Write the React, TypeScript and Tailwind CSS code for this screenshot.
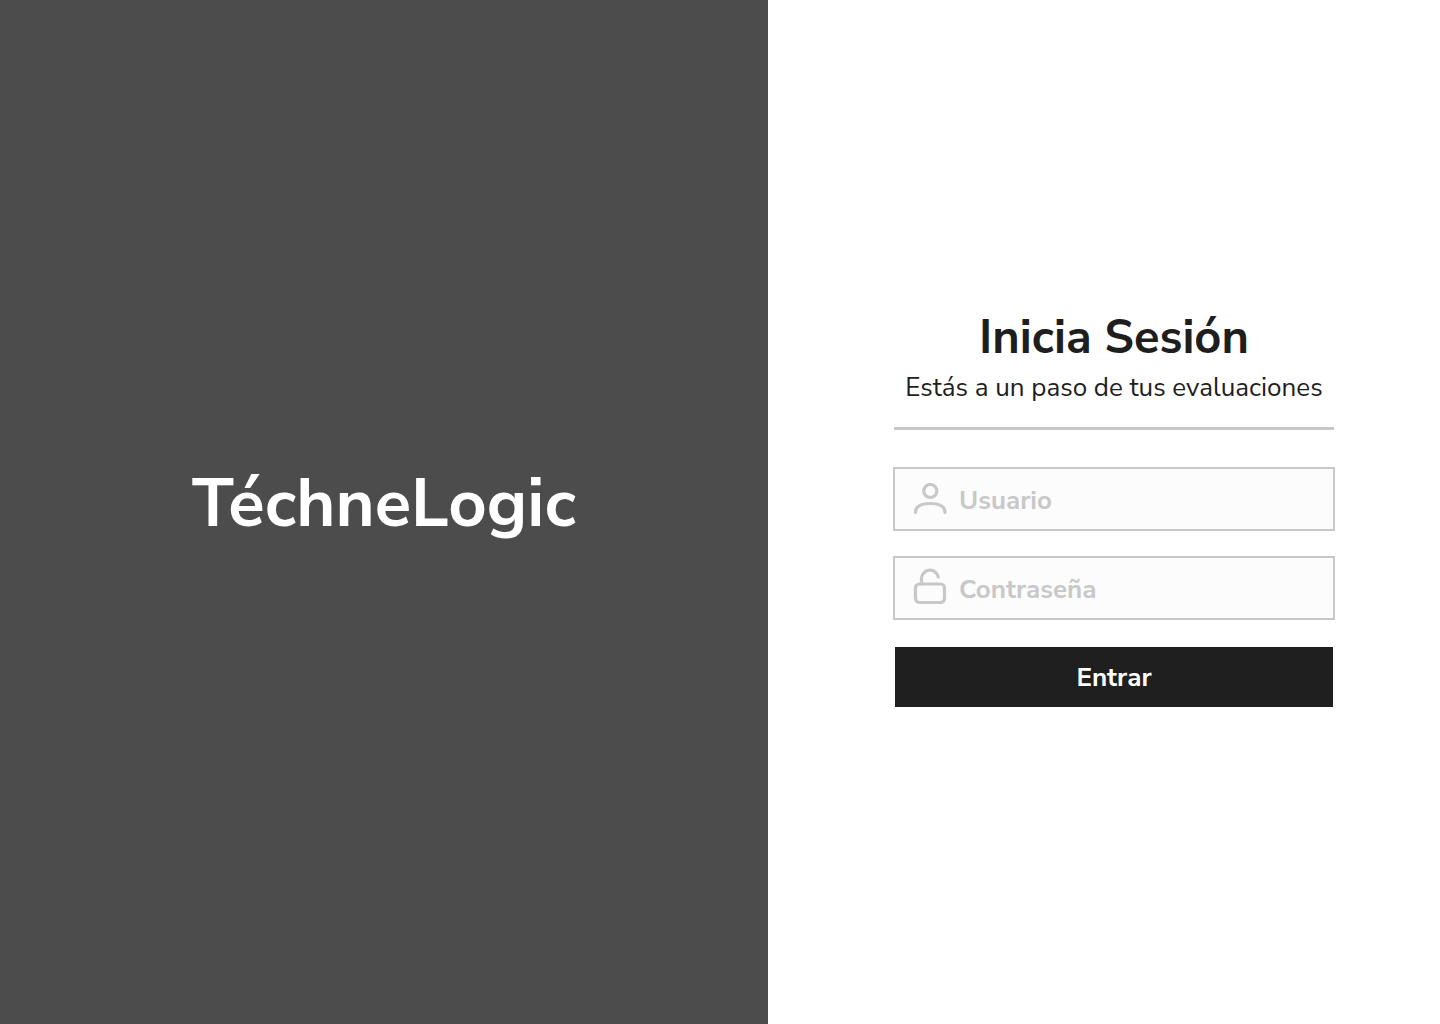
import React from "react";

function UserIcon() {
  return (
    <svg width="34" height="32" viewBox="0 0 34 32" fill="none" stroke="currentColor" strokeWidth="3.200" strokeLinecap="round" aria-hidden="true">
      <circle cx="17.300" cy="8" r="6.500" />
      <path d="M2.500 29.500C2.500 23 9 20.500 17.300 20.500S32 23 32 29.500" />
    </svg>
  );
}

function LockIcon() {
  return (
    <svg width="34" height="42" viewBox="0 0 34 42" fill="none" stroke="currentColor" strokeWidth="3.200" strokeLinecap="round" aria-hidden="true">
      <rect x="2.500" y="17" width="29" height="18.500" rx="4" />
      <path d="M8.500 17V11a8.500 8.500 0 0 1 16.800-1" />
    </svg>
  );
}

const fieldStyle =
  "flex h-16 items-center gap-3 border-2 border-[#c8c8c8] bg-[#fcfcfc] px-4.5 text-[#c8c8c8]";
const inputStyle =
  "min-w-0 flex-1 bg-transparent pt-1 text-[26px] leading-8 font-bold text-[#1e1e1e] outline-none placeholder:text-[#c8c8c8]";

export default function App() {
  return (
    <div className="flex min-h-screen bg-white font-['Nunito_Sans','Nunito','Open_Sans',sans-serif]">
      <section className="flex w-8/15 items-center justify-center bg-[#4c4c4c] pb-4">
        <h1 className="text-[67px] font-bold text-white">TéchneLogic</h1>
      </section>
      <main className="flex flex-1 items-center justify-center pr-6 pb-2 pl-11">
        <form className="flex w-full max-w-[442px] flex-col" onSubmit={(e) => e.preventDefault()}>
          <h2 className="text-center text-[47px] leading-[58px] font-bold text-[#1e1e1e]">Inicia Sesión</h2>
          <p className="text-center text-[26px] leading-[42px] text-[#1e1e1e]">Estás a un paso de tus evaluaciones</p>
          <hr className="mx-px mt-[18px] mb-[37px] border-t-3 border-[#c8c8c8]" />
          <label className={fieldStyle}>
            <UserIcon />
            <input className={inputStyle} type="text" placeholder="Usuario" aria-label="Usuario" />
          </label>
          <label className={`mt-[25px] ${fieldStyle}`}>
            <LockIcon />
            <input className={inputStyle} type="password" placeholder="Contraseña" aria-label="Contraseña" />
          </label>
          <button type="submit" className="mx-0.5 mt-[27px] h-[60px] bg-[#1f1f1f] text-[26px] font-bold text-white">Entrar</button>
        </form>
      </main>
    </div>
  );
}
